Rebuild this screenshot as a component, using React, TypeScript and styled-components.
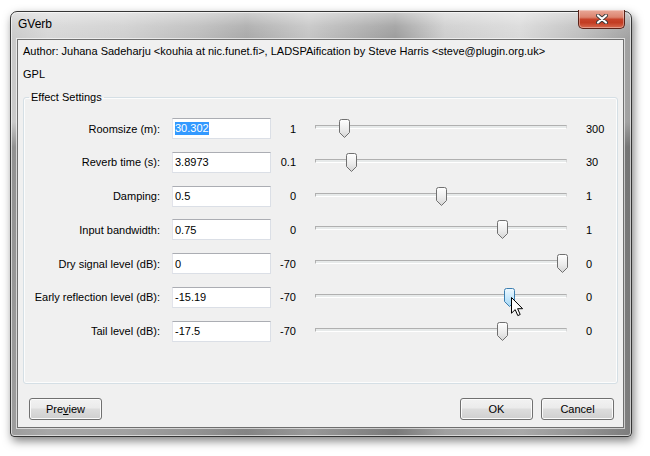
import styled, { createGlobalStyle } from "styled-components";

const GlobalStyle = createGlobalStyle`
  html, body {
    margin: 0;
    padding: 0;
    background: #ffffff;
  }
  body {
    font-family: "Liberation Sans", Arial, sans-serif;
    font-size: 11px;
    color: #000;
  }
`;

const Screen = styled.div`
  position: relative;
  width: 650px;
  height: 456px;
  padding: 11px 0 0 10px;
  box-sizing: border-box;
  overflow: hidden;
`;

const Window = styled.div`
  width: 622px;
  height: 426px;
  box-sizing: border-box;
  display: flex;
  flex-direction: column;
  padding: 0 7px 8px 6px;
  border: 1px solid #353535;
  border-radius: 7px 7px 4px 4px;
  background:
    linear-gradient(180deg, rgba(255, 255, 255, 0.45) 0, rgba(255, 255, 255, 0.12) 14px, rgba(255, 255, 255, 0) 27px),
    linear-gradient(180deg, rgba(0, 0, 0, 0) 0, rgba(0, 0, 0, 0) 110px, rgba(0, 0, 0, 0.28) 135px, rgba(0, 0, 0, 0.22) 100%),
    linear-gradient(90deg, #c9c9c9 0%, #d6d6d6 6%, #cfcfcf 18%, #bcbcbc 30%, #a9a9a9 38%, #c4c4c4 48%, #9c9c9c 62%, #cdcdcd 70%, #d9d9d9 82%, #bdbdbd 92%, #a0a0a0 100%);
  box-shadow: 2px 4px 10px rgba(0, 0, 0, 0.5), inset 0 0 0 1px rgba(255, 255, 255, 0.6);
`;

const TitleBar = styled.div`
  height: 27px;
  display: flex;
  justify-content: space-between;
  align-items: flex-start;
  margin-right: -1px;
`;

const Title = styled.div`
  padding: 5px 0 0 1px;
  line-height: 14px;
  font-size: 12px;
  color: #000;
`;

const CloseButton = styled.div`
  width: 47px;
  height: 19px;
  margin-top: -2px;
  box-sizing: border-box;
  display: flex;
  align-items: center;
  justify-content: center;
  border: 1px solid #5b2218;
  border-top: none;
  border-radius: 0 0 5px 5px;
  background: linear-gradient(180deg, #e9a898 0%, #dc846f 40%, #c7432a 52%, #c23c22 70%, #d86a4f 100%);
  box-shadow: inset 0 0 0 1px rgba(255, 255, 255, 0.35);
`;

const Client = styled.div`
  flex: 1;
  display: flex;
  flex-direction: column;
  background: #f0f0f0;
  border: 1px solid #6f6f6f;
  box-shadow: 0 0 0 1px rgba(255, 255, 255, 0.6);
  padding: 4px 0 7px 0;
`;

const InfoLine = styled.div`
  line-height: 14px;
  padding-left: 5px;
  margin-bottom: 9px;
  white-space: nowrap;
`;

const Group = styled.fieldset`
  flex: 1;
  margin: 0 5px;
  padding: 0;
  min-width: 0;
  border: 1px solid #d5dfe5;
  border-radius: 3px;
  box-shadow: inset 0 0 0 1px #fcfcfc;
`;

const Legend = styled.legend`
  margin-left: 5px;
  padding: 0 2px;
  line-height: 14px;
`;

const Rows = styled.div`
  display: flex;
  flex-direction: column;
  gap: 12.8px;
  padding-top: 14px;
`;

const Row = styled.div`
  display: flex;
  align-items: center;
  height: 21px;
`;

const Label = styled.div`
  width: 136px;
  text-align: right;
  white-space: nowrap;
`;

const TextBox = styled.div`
  width: 99px;
  height: 21px;
  margin-left: 12px;
  box-sizing: border-box;
  display: flex;
  align-items: center;
  padding-left: 2px;
  background: #fff;
  border: 1px solid #dbdfe6;
  border-top-color: #abadb3;
  border-left-color: #e2e3ea;
`;

const Selected = styled.span`
  background: #3399ff;
  color: #fff;
  line-height: 13px;
`;

const MinValue = styled.div`
  width: 25px;
  text-align: right;
  padding-right: 1px;
`;

const Slider = styled.div`
  position: relative;
  width: 252px;
  height: 21px;
  margin-left: 18px;
`;

const Track = styled.div`
  margin-top: 7px;
  height: 4px;
  box-sizing: border-box;
  background: #e7eaea;
  border: 1px solid #d6d6d6;
  border-top-color: #b0b0b0;
  border-left-color: #b0b0b0;
  border-bottom-color: #ffffff;
`;

const ThumbWrap = styled.div`
  position: absolute;
  top: 1px;
  width: 11px;
  height: 19px;
`;

const MaxValue = styled.div`
  margin-left: 19px;
`;

const ButtonBar = styled.div`
  display: flex;
  align-items: center;
  gap: 8px;
  margin-top: 14px;
  padding: 0 9px 0 11px;
`;

const Spacer = styled.div`
  flex: 1;
`;

const Button = styled.div`
  width: 73px;
  height: 22px;
  box-sizing: border-box;
  display: flex;
  align-items: center;
  justify-content: center;
  border: 1px solid #707070;
  border-radius: 3px;
  background: linear-gradient(180deg, #f2f2f2 0%, #ebebeb 45%, #dddddd 50%, #cfcfcf 100%);
  box-shadow: inset 0 0 0 1px #fbfbfb;
  u {
    text-decoration: underline;
  }
`;

const Pointer = styled.div`
  position: absolute;
  left: 511px;
  top: 297px;
  width: 13px;
  height: 20px;
`;

interface Setting {
  label: string;
  value: string;
  min: number;
  max: number;
  minText: string;
  maxText: string;
  selected?: boolean;
  hover?: boolean;
}

const settings: Setting[] = [
  { label: "Roomsize (m):", value: "30.302", min: 1, max: 300, minText: "1", maxText: "300", selected: true },
  { label: "Reverb time (s):", value: "3.8973", min: 0.1, max: 30, minText: "0.1", maxText: "30" },
  { label: "Damping:", value: "0.5", min: 0, max: 1, minText: "0", maxText: "1" },
  { label: "Input bandwidth:", value: "0.75", min: 0, max: 1, minText: "0", maxText: "1" },
  { label: "Dry signal level (dB):", value: "0", min: -70, max: 0, minText: "-70", maxText: "0" },
  { label: "Early reflection level (dB):", value: "-15.19", min: -70, max: 0, minText: "-70", maxText: "0", hover: true },
  { label: "Tail level (dB):", value: "-17.5", min: -70, max: 0, minText: "-70", maxText: "0" },
];

function Thumb({ hover }: { hover?: boolean }) {
  const id = hover ? "thumbHover" : "thumbNormal";
  return (
    <svg width="11" height="19" viewBox="0 0 11 19">
      <defs>
        <linearGradient id={id} x1="0" y1="0" x2="0" y2="1">
          {hover ? (
            <>
              <stop offset="0" stopColor="#f0f9fe" />
              <stop offset="0.5" stopColor="#c9e9fc" />
              <stop offset="1" stopColor="#a4d6f4" />
            </>
          ) : (
            <>
              <stop offset="0" stopColor="#ffffff" />
              <stop offset="0.55" stopColor="#ececec" />
              <stop offset="1" stopColor="#d4d4d4" />
            </>
          )}
        </linearGradient>
      </defs>
      <path
        d="M0.5 2.5 Q0.5 0.5 2.5 0.5 H8.5 Q10.5 0.5 10.5 2.5 V13.5 L5.5 18.5 L0.5 13.5 Z"
        fill={`url(#${id})`}
        stroke={hover ? "#3c7fb1" : "#707070"}
      />
    </svg>
  );
}

function CloseGlyph() {
  return (
    <svg width="12" height="10" viewBox="0 0 12 10">
      <path d="M2 1.5 L10 8.5 M10 1.5 L2 8.5" stroke="#3a3a3a" strokeWidth="4" strokeLinecap="round" />
      <path d="M2 1.5 L10 8.5 M10 1.5 L2 8.5" stroke="#ffffff" strokeWidth="2.2" strokeLinecap="round" />
    </svg>
  );
}

function ArrowCursor() {
  return (
    <svg width="13" height="20" viewBox="0 0 13 20">
      <path
        d="M0.5 0.5 V16.2 L4.2 12.6 L6.8 18.6 L9.2 17.5 L6.6 11.7 H11.6 Z"
        fill="#ffffff"
        stroke="#000000"
        strokeLinejoin="miter"
      />
    </svg>
  );
}

function App() {
  return (
    <Screen>
      <GlobalStyle />
      <Window>
        <TitleBar>
          <Title>GVerb</Title>
          <CloseButton>
            <CloseGlyph />
          </CloseButton>
        </TitleBar>
        <Client>
          <InfoLine>
            Author: Juhana Sadeharju &lt;kouhia at nic.funet.fi&gt;, LADSPAification by Steve Harris
            &lt;steve@plugin.org.uk&gt;
          </InfoLine>
          <InfoLine>GPL</InfoLine>
          <Group>
            <Legend>Effect Settings</Legend>
            <Rows>
              {settings.map((s) => {
                const frac = (parseFloat(s.value) - s.min) / (s.max - s.min);
                return (
                  <Row key={s.label}>
                    <Label>{s.label}</Label>
                    <TextBox>{s.selected ? <Selected>{s.value}</Selected> : s.value}</TextBox>
                    <MinValue>{s.minText}</MinValue>
                    <Slider>
                      <Track />
                      <ThumbWrap style={{ left: `${Math.round(frac * 242)}px` }}>
                        <Thumb hover={s.hover} />
                      </ThumbWrap>
                    </Slider>
                    <MaxValue>{s.maxText}</MaxValue>
                  </Row>
                );
              })}
            </Rows>
          </Group>
          <ButtonBar>
            <Button>
              <span>
                Pre<u>v</u>iew
              </span>
            </Button>
            <Spacer />
            <Button>OK</Button>
            <Button>Cancel</Button>
          </ButtonBar>
        </Client>
      </Window>
      <Pointer>
        <ArrowCursor />
      </Pointer>
    </Screen>
  );
}

export default App;
